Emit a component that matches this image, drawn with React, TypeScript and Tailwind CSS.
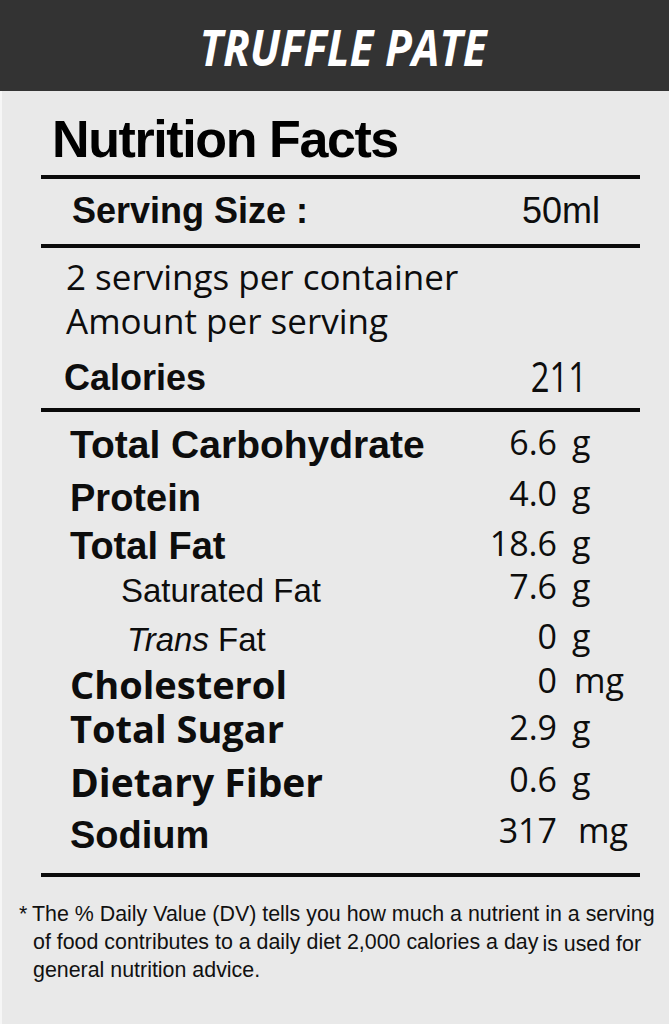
import React from "react";

const ARIAL = "font-['Liberation_Sans',Arial,sans-serif]";
const OPEN = "font-['Open_Sans',sans-serif]";

type Row = {
  label: React.ReactNode;
  labelCls: string;
  rowCls: string;
  num: string;
  unit: string;
  unitCls: string;
  shift: string;
};

const rows: Row[] = [
  {
    label: "Total Carbohydrate",
    labelCls: `${ARIAL} font-bold text-[39px] leading-none pl-[29px]`,
    rowCls: "h-[54px]",
    num: "6.6",
    unit: "g",
    unitCls: "pl-[15px]",
    shift: "-translate-y-[3px]",
  },
  {
    label: "Protein",
    labelCls: `${ARIAL} font-bold text-[38px] leading-none pl-[29px]`,
    rowCls: "h-[48px]",
    num: "4.0",
    unit: "g",
    unitCls: "pl-[15px]",
    shift: "-translate-y-[5px]",
  },
  {
    label: "Total Fat",
    labelCls: `${ARIAL} font-bold text-[38px] leading-none pl-[29px]`,
    rowCls: "h-[45px]",
    num: "18.6",
    unit: "g",
    unitCls: "pl-[15px]",
    shift: "-translate-y-[3px]",
  },
  {
    label: "Saturated Fat",
    labelCls: `${ARIAL} text-[33px] leading-none pl-[80px]`,
    rowCls: "h-[49px]",
    num: "7.6",
    unit: "g",
    unitCls: "pl-[15px]",
    shift: "-translate-y-[3px]",
  },
  {
    label: (
      <>
        <span className="italic">Trans</span> Fat
      </>
    ),
    labelCls: `${ARIAL} text-[33px] leading-none pl-[86px]`,
    rowCls: "h-[44px]",
    num: "0",
    unit: "g",
    unitCls: "pl-[15px]",
    shift: "-translate-y-[2px]",
  },
  {
    label: "Cholesterol",
    labelCls: `${OPEN} font-bold text-[38px] leading-none pl-[29px]`,
    rowCls: "h-[44px]",
    num: "0",
    unit: "mg",
    unitCls: "pl-[17px]",
    shift: "-translate-y-[6px]",
  },
  {
    label: "Total Sugar",
    labelCls: `${OPEN} font-bold text-[38px] leading-none pl-[29px]`,
    rowCls: "h-[53px]",
    num: "2.9",
    unit: "g",
    unitCls: "pl-[15px]",
    shift: "-translate-y-[3px]",
  },
  {
    label: "Dietary Fiber",
    labelCls: `${OPEN} font-bold text-[39px] leading-none pl-[29px]`,
    rowCls: "h-[54px]",
    num: "0.6",
    unit: "g",
    unitCls: "pl-[15px]",
    shift: "-translate-y-[5px]",
  },
  {
    label: "Sodium",
    labelCls: `${ARIAL} font-bold text-[38px] leading-none pl-[29px]`,
    rowCls: "h-[57px]",
    num: "317",
    unit: "mg",
    unitCls: "pl-[21px]",
    shift: "-translate-y-[5px]",
  },
];

function Rule() {
  return <div className="h-[4px] bg-[#0a0a0a]" />;
}

export default function App() {
  return (
    <div className="w-[669px] h-[1024px] overflow-hidden text-[#0d0d0d]">
      <header className="h-[91px] bg-[#333333] flex items-center justify-center pl-[18px] pt-[3px]">
        <h1
          className={`${OPEN} font-bold italic text-[50px] leading-none text-white inline-block scale-x-[0.88]`}
        >
          TRUFFLE PATE
        </h1>
      </header>

      <main className="h-[933px] bg-[#e9e9e9] shadow-[inset_2px_0_0_#f6f6f6]">
        <div className="ml-[41px] w-[599px]">
          <h2
            className={`${ARIAL} font-bold text-[52px] leading-none tracking-[-1.4px] pt-[22px] pl-[11px] mb-[10px] text-black`}
          >
            Nutrition Facts
          </h2>
          <Rule />

          <div className="h-[65px] pt-[14px] flex items-baseline justify-between pl-[31px] pr-[40px]">
            <span className={`${ARIAL} font-bold text-[36px] leading-none`}>Serving Size :</span>
            <span className={`${ARIAL} text-[36px] leading-none`}>50ml</span>
          </div>
          <Rule />

          <div className={`${OPEN} text-[35px] leading-[44px] pt-[7px] pl-[25px]`}>
            <div>2 servings per container</div>
            <div>Amount per serving</div>
          </div>

          <div className="mt-[10px] h-[55px] flex items-baseline pl-[23px]">
            <span className={`${ARIAL} font-bold text-[36px] leading-none flex-1`}>Calories</span>
            <span
              className={`${OPEN} text-[42px] leading-none inline-block scale-x-[0.78] origin-right translate-y-[2px] mr-[53px]`}
            >
              211
            </span>
          </div>
          <Rule />

          <div className="mt-[13px]">
            {rows.map((r, i) => (
              <div key={i} className={`flex items-baseline ${r.rowCls}`}>
                <span className={`${r.labelCls} flex-1 whitespace-nowrap`}>{r.label}</span>
                <span className={`flex items-baseline ${r.shift}`}>
                  <span className={`${OPEN} text-[34px] leading-none text-right`}>{r.num}</span>
                  <span className={`${OPEN} text-[34px] leading-none w-[83px] ${r.unitCls}`}>
                    {r.unit}
                  </span>
                </span>
              </div>
            ))}
          </div>
          <Rule />
        </div>

        <div
          className={`${ARIAL} text-[21.4px] leading-[28px] mt-[23px] pl-[19px] flex text-[#111]`}
        >
          <span className="w-[13px]">*</span>
          <div className="whitespace-nowrap">
            <div>The % Daily Value (DV) tells you how much a nutrient in a serving</div>
            <div className="pl-[1px]">
              of food contributes to a daily diet 2,000 calories a day
              <span className="inline-block ml-[4px] translate-y-[2px]">is used for</span>
            </div>
            <div className="pl-[1px]">general nutrition advice.</div>
          </div>
        </div>
      </main>
    </div>
  );
}
